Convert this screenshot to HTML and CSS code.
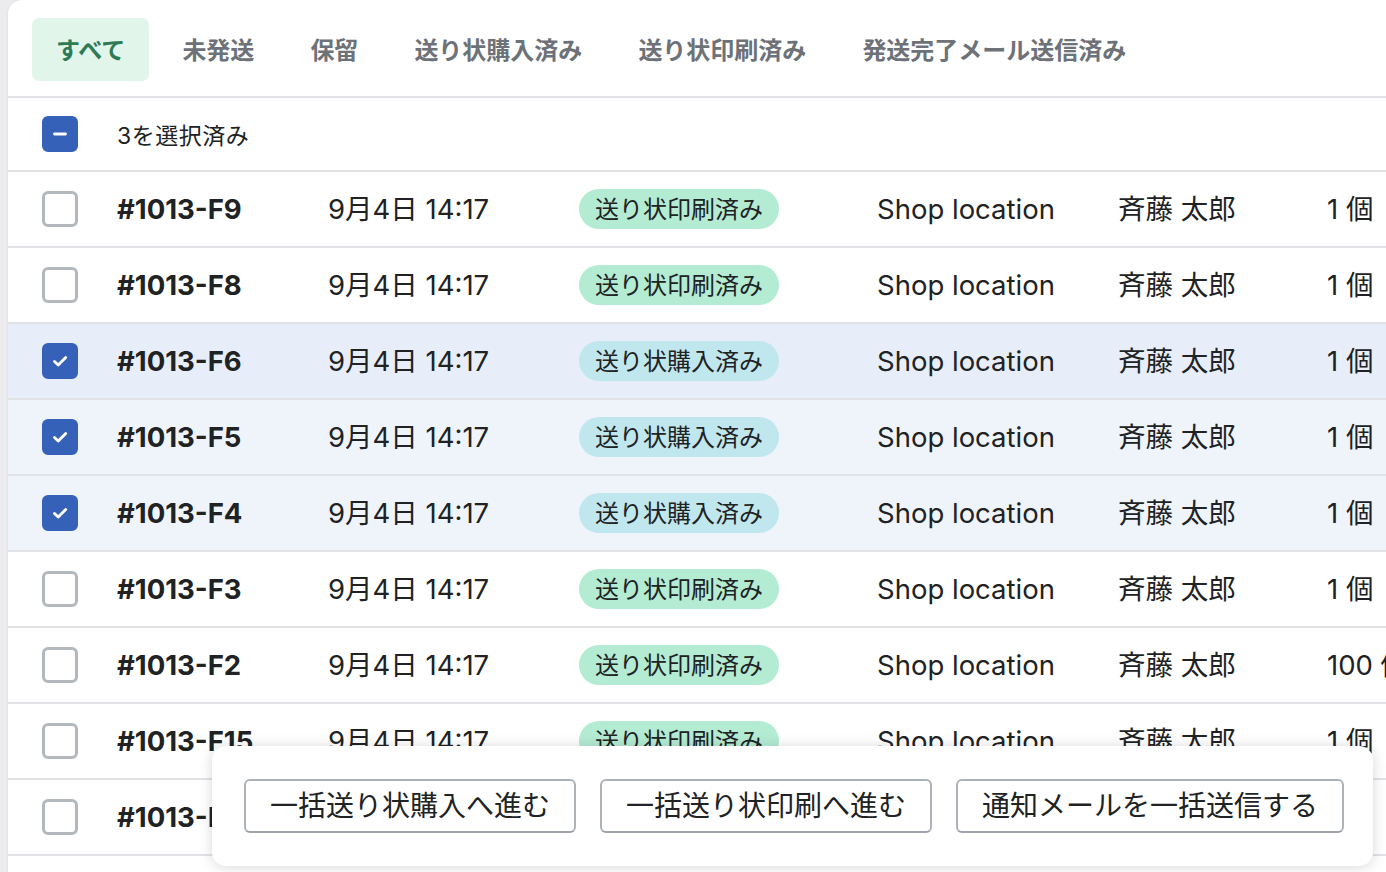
FILE: index.html
```html
<!DOCTYPE html>
<html lang="ja">
<head>
	<meta charset="UTF-8">
	<title>出荷一覧</title>
	<link rel="stylesheet" href="styles.css">
</head>
<body>
	<div class="orders-card">
		<div class="tabs">
			<div class="tab tab-active">すべて</div>
			<div class="tab">未発送</div>
			<div class="tab">保留</div>
			<div class="tab">送り状購入済み</div>
			<div class="tab">送り状印刷済み</div>
			<div class="tab">発送完了メール送信済み</div>
		</div>

		<div class="select-row">
			<span class="checkbox checkbox-on">
				<svg viewBox="0 0 20 20" width="20" height="20"><path d="M4.5 10h11" stroke="#fff" stroke-width="2.8" stroke-linecap="round"/></svg>
			</span>
			<span class="select-text">3を選択済み</span>
		</div>

		<div class="order-row">
			<span class="checkbox"></span>
			<span class="order-id">#1013-F9</span>
			<span>9月4日 14:17</span>
			<span><span class="badge badge-printed">送り状印刷済み</span></span>
			<span>Shop location</span>
			<span>斉藤 太郎</span>
			<span>1 個</span>
		</div>

		<div class="order-row">
			<span class="checkbox"></span>
			<span class="order-id">#1013-F8</span>
			<span>9月4日 14:17</span>
			<span><span class="badge badge-printed">送り状印刷済み</span></span>
			<span>Shop location</span>
			<span>斉藤 太郎</span>
			<span>1 個</span>
		</div>

		<div class="order-row row-selected row-hover">
			<span class="checkbox checkbox-on">
				<svg viewBox="0 0 20 20" width="22" height="22"><path d="M5 10.4l3.4 3.2 6.8-6.8" fill="none" stroke="#fff" stroke-width="2.6" stroke-linecap="round" stroke-linejoin="round"/></svg>
			</span>
			<span class="order-id">#1013-F6</span>
			<span>9月4日 14:17</span>
			<span><span class="badge badge-bought">送り状購入済み</span></span>
			<span>Shop location</span>
			<span>斉藤 太郎</span>
			<span>1 個</span>
		</div>

		<div class="order-row row-selected">
			<span class="checkbox checkbox-on">
				<svg viewBox="0 0 20 20" width="22" height="22"><path d="M5 10.4l3.4 3.2 6.8-6.8" fill="none" stroke="#fff" stroke-width="2.6" stroke-linecap="round" stroke-linejoin="round"/></svg>
			</span>
			<span class="order-id">#1013-F5</span>
			<span>9月4日 14:17</span>
			<span><span class="badge badge-bought">送り状購入済み</span></span>
			<span>Shop location</span>
			<span>斉藤 太郎</span>
			<span>1 個</span>
		</div>

		<div class="order-row row-selected">
			<span class="checkbox checkbox-on">
				<svg viewBox="0 0 20 20" width="22" height="22"><path d="M5 10.4l3.4 3.2 6.8-6.8" fill="none" stroke="#fff" stroke-width="2.6" stroke-linecap="round" stroke-linejoin="round"/></svg>
			</span>
			<span class="order-id">#1013-F4</span>
			<span>9月4日 14:17</span>
			<span><span class="badge badge-bought">送り状購入済み</span></span>
			<span>Shop location</span>
			<span>斉藤 太郎</span>
			<span>1 個</span>
		</div>

		<div class="order-row">
			<span class="checkbox"></span>
			<span class="order-id">#1013-F3</span>
			<span>9月4日 14:17</span>
			<span><span class="badge badge-printed">送り状印刷済み</span></span>
			<span>Shop location</span>
			<span>斉藤 太郎</span>
			<span>1 個</span>
		</div>

		<div class="order-row">
			<span class="checkbox"></span>
			<span class="order-id">#1013-F2</span>
			<span>9月4日 14:17</span>
			<span><span class="badge badge-printed">送り状印刷済み</span></span>
			<span>Shop location</span>
			<span>斉藤 太郎</span>
			<span class="qty">100 個</span>
		</div>

		<div class="order-row">
			<span class="checkbox"></span>
			<span class="order-id">#1013-F15</span>
			<span>9月4日 14:17</span>
			<span><span class="badge badge-printed">送り状印刷済み</span></span>
			<span>Shop location</span>
			<span>斉藤 太郎</span>
			<span>1 個</span>
		</div>

		<div class="order-row">
			<span class="checkbox"></span>
			<span class="order-id">#1013-F14</span>
			<span>9月4日 14:17</span>
			<span><span class="badge badge-printed">送り状印刷済み</span></span>
			<span>Shop location</span>
			<span>斉藤 太郎</span>
			<span>1 個</span>
		</div>
	</div>

	<div class="bulk-bar">
		<button class="bulk-button">一括送り状購入へ進む</button>
		<button class="bulk-button">一括送り状印刷へ進む</button>
		<button class="bulk-button">通知メールを一括送信する</button>
	</div>
</body>
</html>
```

FILE: styles.css
```css
html, body {
	margin: 0;
	height: 100%;
	overflow: hidden;
}

body {
	font-family: Inter, "Noto Sans CJK JP", sans-serif;
	background-color: #ececee;
	color: #202223;
}

.orders-card {
	margin-left: 8px;
	width: 1420px;
	height: 900px;
	background-color: white;
	border-top-left-radius: 14px;
	box-shadow: 0 0 3px rgba(0, 0, 0, 0.08);
}

.tabs {
	display: flex;
	gap: 10px;
	height: 63px;
	padding: 18px 0 15px 24px;
	border-bottom: 2px solid #e1e3e6;
}

.tab {
	display: flex;
	align-items: center;
	padding: 0 23px 2px;
	border-radius: 7px;
	font-size: 24px;
	font-weight: bold;
	color: #6d7178;
}

.tab-active {
	padding: 0 24px 2px;
	background-color: #e1f5eb;
	color: #2f7a56;
}

.select-row {
	display: flex;
	align-items: center;
	height: 72px;
	padding-left: 34px;
	border-bottom: 2px solid #e1e3e6;
}

.select-text {
	margin-left: 39px;
	font-size: 23px;
	letter-spacing: 0.5px;
}

.checkbox {
	box-sizing: border-box;
	display: flex;
	align-items: center;
	justify-content: center;
	width: 36px;
	height: 36px;
	border: 3px solid #b3b7be;
	border-radius: 6px;
	background-color: white;
}

.checkbox-on {
	border-color: #3661b8;
	background-color: #3661b8;
}

.order-row {
	display: grid;
	grid-template-columns: 75px 211px 251px 298px 241px 209px 100px;
	align-items: center;
	height: 74px;
	padding-left: 34px;
	border-bottom: 2px solid #e1e3e6;
	font-size: 27.5px;
	line-height: 34px;
	white-space: nowrap;
}

.row-selected {
	background-color: #eff4fb;
}

.row-hover {
	background-color: #e7eef9;
}

.order-id {
	font-weight: bold;
}

.badge {
	display: inline-block;
	padding: 2px 16px 0;
	border-radius: 20px;
	font-size: 24px;
	line-height: 38px;
}

.badge-printed {
	background-color: #b3ebd3;
}

.badge-bought {
	background-color: #c1e7ee;
}

/* floating bulk action bar */
.bulk-bar {
	position: absolute;
	left: 212px;
	top: 746px;
	width: 1161px;
	height: 120px;
	box-sizing: border-box;
	display: flex;
	align-items: center;
	gap: 24px;
	padding-left: 32px;
	background-color: white;
	border-radius: 14px;
	box-shadow: 0 1px 14px rgba(0, 0, 0, 0.16);
}

.bulk-button {
	height: 54px;
	padding: 0 24px;
	border: 2px solid #adb1b8;
	border-bottom-color: #9ea2aa;
	border-radius: 6px;
	background-color: white;
	font-family: Inter, "Noto Sans CJK JP", sans-serif;
	font-size: 28px;
	line-height: 34px;
	color: #202223;
}
```
